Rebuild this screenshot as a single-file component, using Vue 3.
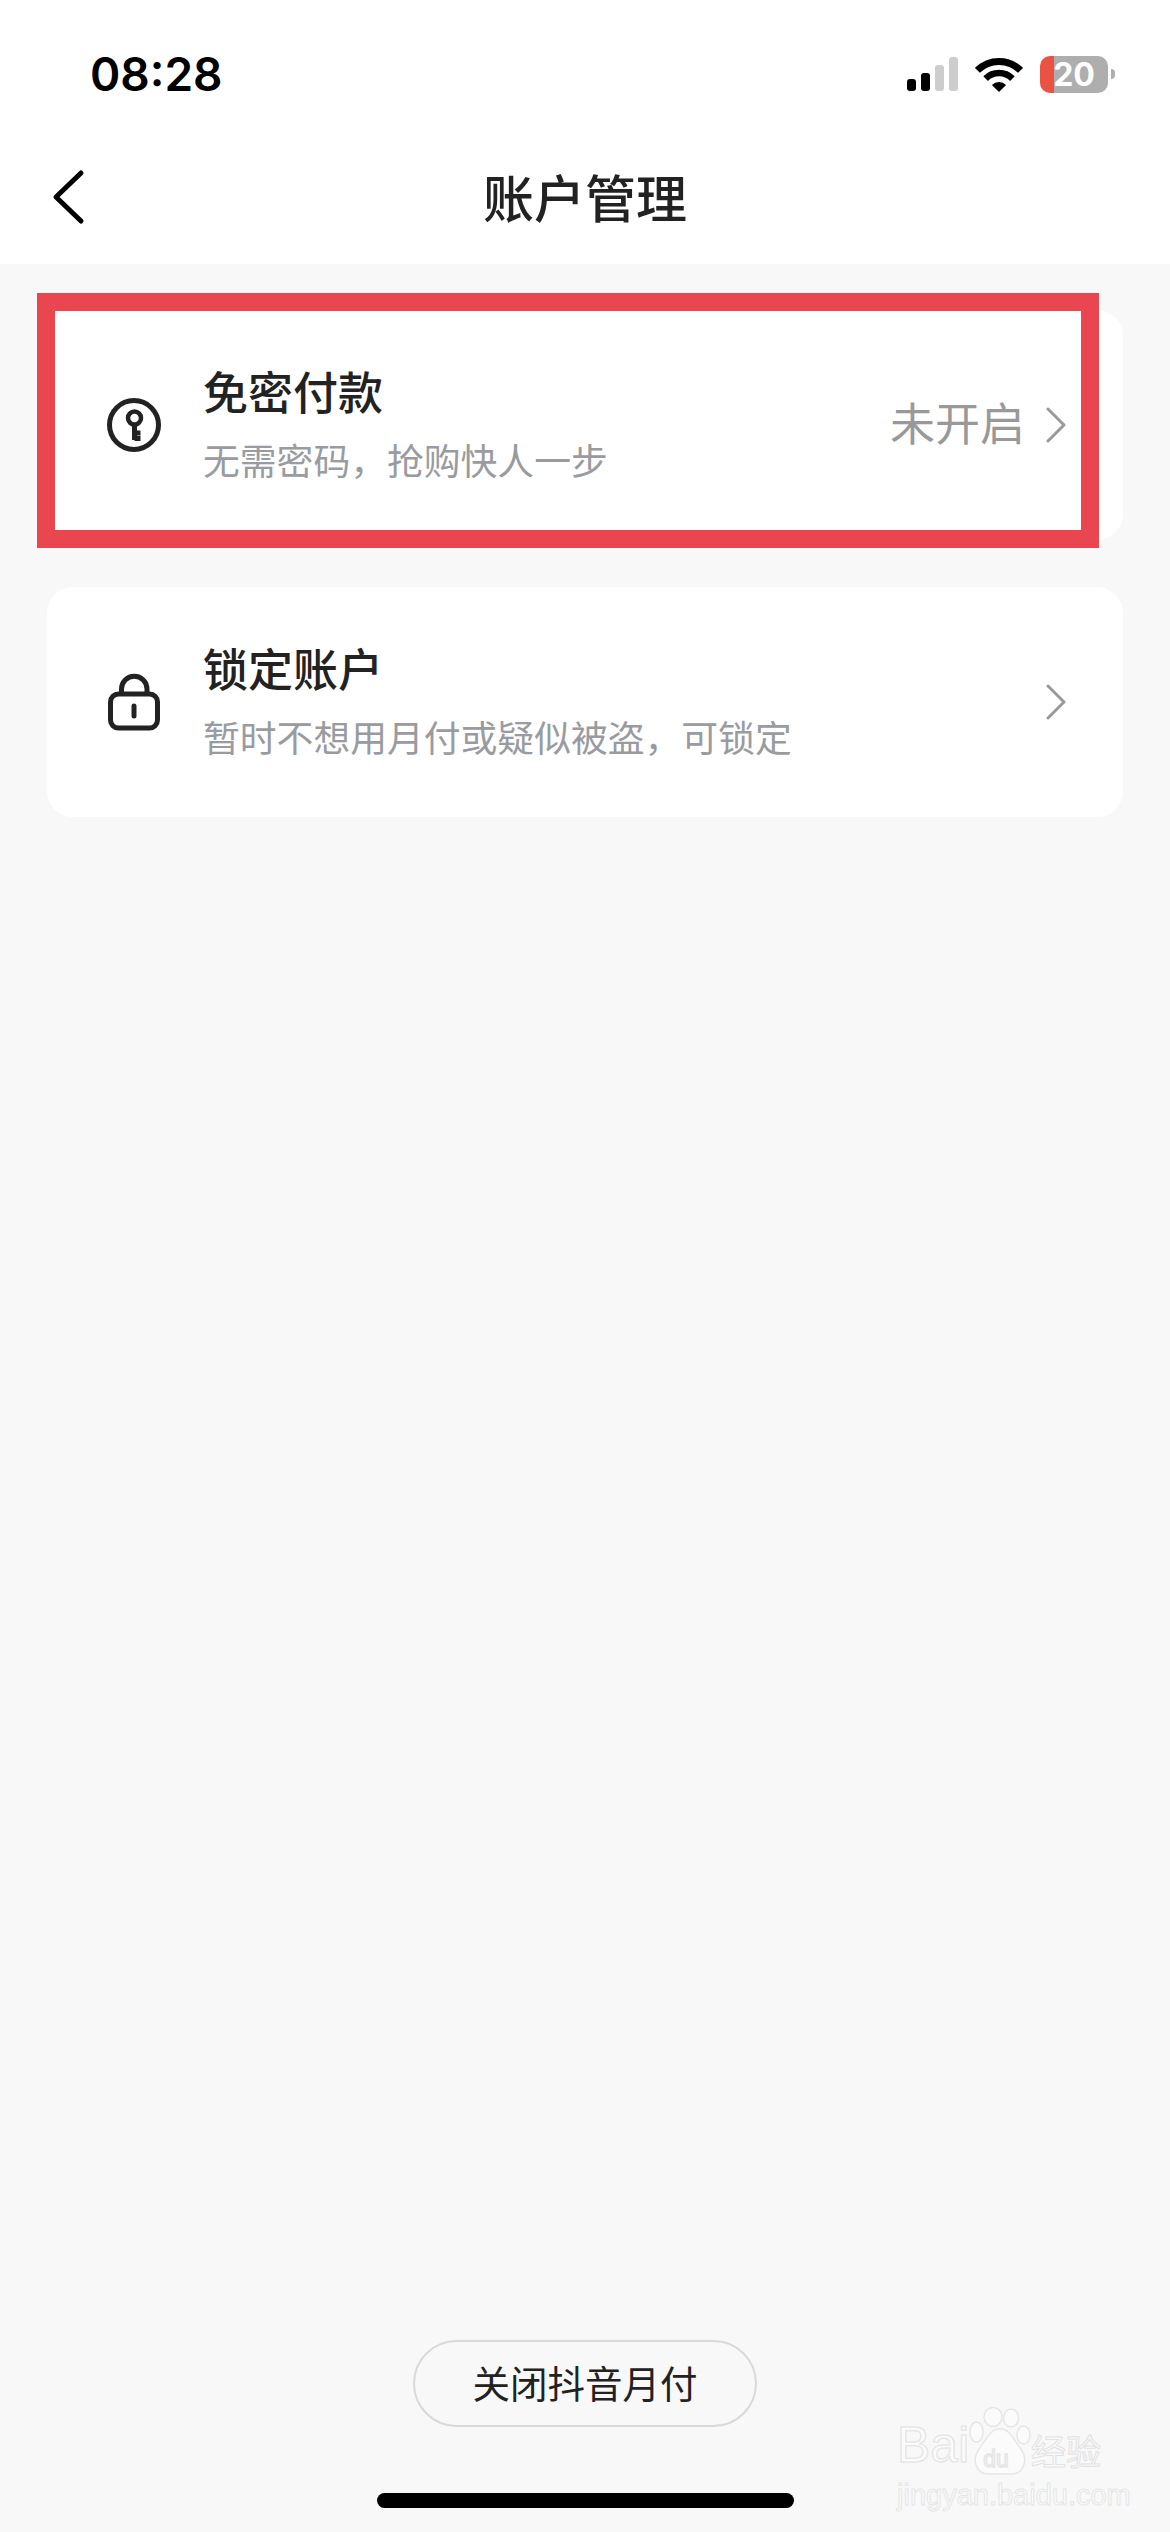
<template>
	<div class="page">
		<header class="top">
			<div class="status">
				<span class="time">08:28</span>
				<div class="status-icons">
					<div class="signal">
						<i v-for="bar in bars" :key="bar.h" :class="{ off: bar.off }" :style="{ height: bar.h + 'px' }" />
					</div>
					<svg class="wifi" width="48" height="36" viewBox="0 0 48 36" fill="none" stroke="#000">
						<path d="M2.4 14.4A30.5 30.5 0 0 1 45.6 14.4" stroke-width="7" />
						<path d="M10.6 22.6A19 19 0 0 1 37.4 22.6" stroke-width="6.5" />
						<path d="M24 36L16.9 28.9A10 10 0 0 1 31.1 28.9Z" fill="#000" stroke="none" />
					</svg>
					<div class="battery">
						<div class="battery-body">20</div>
						<div class="battery-nub" />
					</div>
				</div>
			</div>
			<nav class="nav">
				<svg class="back" width="34" height="56" viewBox="0 0 34 56" fill="none" stroke="#000" stroke-width="5" stroke-linecap="round" stroke-linejoin="round">
					<path d="M29 4L4 28L29 52" />
				</svg>
				<h1>账户管理</h1>
			</nav>
		</header>

		<main class="content">
			<div class="card">
				<div class="icon">
					<svg width="54" height="54" viewBox="0 0 54 54" fill="none" stroke="#222" stroke-width="5">
						<circle cx="27" cy="27" r="24.5" />
						<circle cx="27.5" cy="20" r="6.5" stroke-width="4.5" />
						<path d="M27.5 26V42M27.5 35H33.5M27.5 40.5H33.5" stroke-linecap="butt" />
					</svg>
				</div>
				<div class="text">
					<div class="title">免密付款</div>
					<div class="sub">无需密码，抢购快人一步</div>
				</div>
				<span class="state">未开启</span>
				<svg class="chevron" width="20" height="36" viewBox="0 0 20 36" fill="none" stroke="#999" stroke-width="3" stroke-linecap="round" stroke-linejoin="round">
					<path d="M2 2L18 18L2 34" />
				</svg>
				<div class="highlight" />
			</div>

			<div class="card">
				<div class="icon">
					<svg width="54" height="58" viewBox="0 0 54 58" fill="none" stroke="#222" stroke-width="5">
						<rect x="3.5" y="21" width="47" height="34" rx="8" />
						<path d="M14.5 20V16a12.75 12.75 0 0 1 25.5 0V20" />
						<path d="M27 33V43" stroke-linecap="round" />
					</svg>
				</div>
				<div class="text">
					<div class="title">锁定账户</div>
					<div class="sub">暂时不想用月付或疑似被盗，可锁定</div>
				</div>
				<svg class="chevron" width="20" height="36" viewBox="0 0 20 36" fill="none" stroke="#999" stroke-width="3" stroke-linecap="round" stroke-linejoin="round">
					<path d="M2 2L18 18L2 34" />
				</svg>
			</div>
		</main>

		<footer class="foot">
			<button class="close-btn">关闭抖音月付</button>
			<div class="home-bar" />
		</footer>

		<div class="watermark">
			<div class="wm-logo">
				<span class="wm-bai">Bai</span>
				<svg class="wm-paw" width="62" height="68" viewBox="0 0 62 68" fill="#fbfbfb" stroke="#e6e6e6" stroke-width="1.5">
					<ellipse cx="24" cy="10" rx="9" ry="9.5" />
					<ellipse cx="42" cy="11" rx="7.5" ry="9" />
					<ellipse cx="7.5" cy="25" rx="6.5" ry="10" />
					<ellipse cx="54.5" cy="28" rx="6.5" ry="9" />
					<path d="M31 22C41 22 44 32 52 42C60 54 54 67 42 67H19C8 67 2 54 10 42C18 32 21 22 31 22Z" />
					<text x="27" y="60" text-anchor="middle" font-size="23" font-family="'Liberation Sans', sans-serif">du</text>
				</svg>
				<span class="wm-cn">经验</span>
			</div>
			<div class="wm-url">jingyan.baidu.com</div>
		</div>
	</div>
</template>

<script setup>
const bars = [
	{ h: 12, off: false },
	{ h: 18, off: false },
	{ h: 26, off: true },
	{ h: 34, off: true },
];
</script>

<style>
html,
body {
	margin: 0;
	background: #f8f8f8;
}
</style>

<style scoped>
.page {
	position: relative;
	display: flex;
	flex-direction: column;
	width: 1170px;
	height: 2532px;
	overflow: hidden;
	background: #f8f8f8;
	font-family: "Noto Sans CJK SC", "Liberation Sans", sans-serif;
}

.top {
	background: #fff;
}

.status {
	display: flex;
	justify-content: space-between;
	align-items: center;
	box-sizing: border-box;
	height: 130px;
	padding: 50px 55px 32px 90px;
}

.time {
	font-family: Inter, "Liberation Sans", sans-serif;
	font-size: 46px;
	font-weight: 600;
	line-height: 48px;
	color: #000;
}

.status-icons {
	display: flex;
	align-items: center;
	gap: 17px;
}

.signal {
	display: flex;
	align-items: flex-end;
	gap: 5px;
	height: 34px;
}

.signal i {
	display: block;
	width: 9px;
	border-radius: 3px;
	background: #000;
}

.signal i.off {
	background: #cdcdcd;
}

.battery {
	display: flex;
	align-items: center;
	gap: 3px;
}

.battery-body {
	width: 68px;
	height: 37px;
	border-radius: 10px;
	background: linear-gradient(to right, #ea5243 14px, #aeaeae 14px);
	font-family: Inter, "Liberation Sans", sans-serif;
	font-size: 32px;
	font-weight: 700;
	line-height: 37px;
	text-align: center;
	color: #fff;
}

.battery-nub {
	width: 4px;
	height: 10px;
	border-radius: 0 5px 5px 0;
	background: #aeaeae;
}

.nav {
	display: flex;
	align-items: center;
	justify-content: center;
	position: relative;
	box-sizing: border-box;
	height: 134px;
	padding-bottom: 3px;
}

.back {
	position: absolute;
	left: 52px;
	top: 39px;
}

.nav h1 {
	margin: 0;
	font-size: 51px;
	font-weight: 500;
	color: #222;
}

.content {
	flex: 1;
	display: flex;
	flex-direction: column;
	gap: 47px;
	padding: 46px 47px 0;
}

.card {
	position: relative;
	display: flex;
	align-items: center;
	height: 230px;
	padding: 0 57px 0 60px;
	border-radius: 26px;
	background: #fff;
}

.icon {
	display: flex;
	width: 54px;
	margin-right: 42px;
}

.text {
	flex: 1;
	display: flex;
	flex-direction: column;
	gap: 10px;
	padding-bottom: 3px;
}

.title {
	font-size: 45px;
	font-weight: 500;
	line-height: 60px;
	color: #222;
}

.sub {
	font-size: 36.8px;
	line-height: 56px;
	color: #999ba0;
}

.state {
	margin-right: 21px;
	padding-bottom: 8px;
	font-size: 45px;
	color: #999;
}

.chevron {
	flex: none;
}

.highlight {
	position: absolute;
	left: -10px;
	top: -17px;
	right: 24px;
	bottom: -8px;
	border: 18px solid #e94650;
}

.foot {
	display: flex;
	flex-direction: column;
	align-items: center;
	gap: 66px;
	padding-bottom: 24px;
}

.close-btn {
	width: 344px;
	height: 87px;
	padding: 0 0 5px;
	border: 2px solid #d9d9d9;
	border-radius: 44px;
	background: transparent;
	font-family: inherit;
	font-size: 37.5px;
	color: #222;
}

.home-bar {
	width: 417px;
	height: 15px;
	border-radius: 8px;
	background: #000;
}

.watermark {
	position: absolute;
	left: 897px;
	top: 2407px;
	width: 210px;
}

.wm-logo {
	display: flex;
	align-items: flex-end;
	height: 68px;
}

.wm-bai {
	width: 72px;
	font-family: "Liberation Sans", sans-serif;
	font-size: 50px;
	line-height: 60px;
	color: #fbfbfb;
	-webkit-text-stroke: 1.5px #e6e6e6;
}

.wm-paw {
	flex: none;
}

.wm-cn {
	font-size: 35px;
	line-height: 50px;
	color: #fbfbfb;
	-webkit-text-stroke: 1px #e2e2e2;
}

.wm-url {
	margin-top: 4px;
	font-family: "Liberation Sans", sans-serif;
	font-size: 29px;
	line-height: 32px;
	white-space: nowrap;
	color: #fbfbfb;
	-webkit-text-stroke: 1px #e6e6e6;
}
</style>
